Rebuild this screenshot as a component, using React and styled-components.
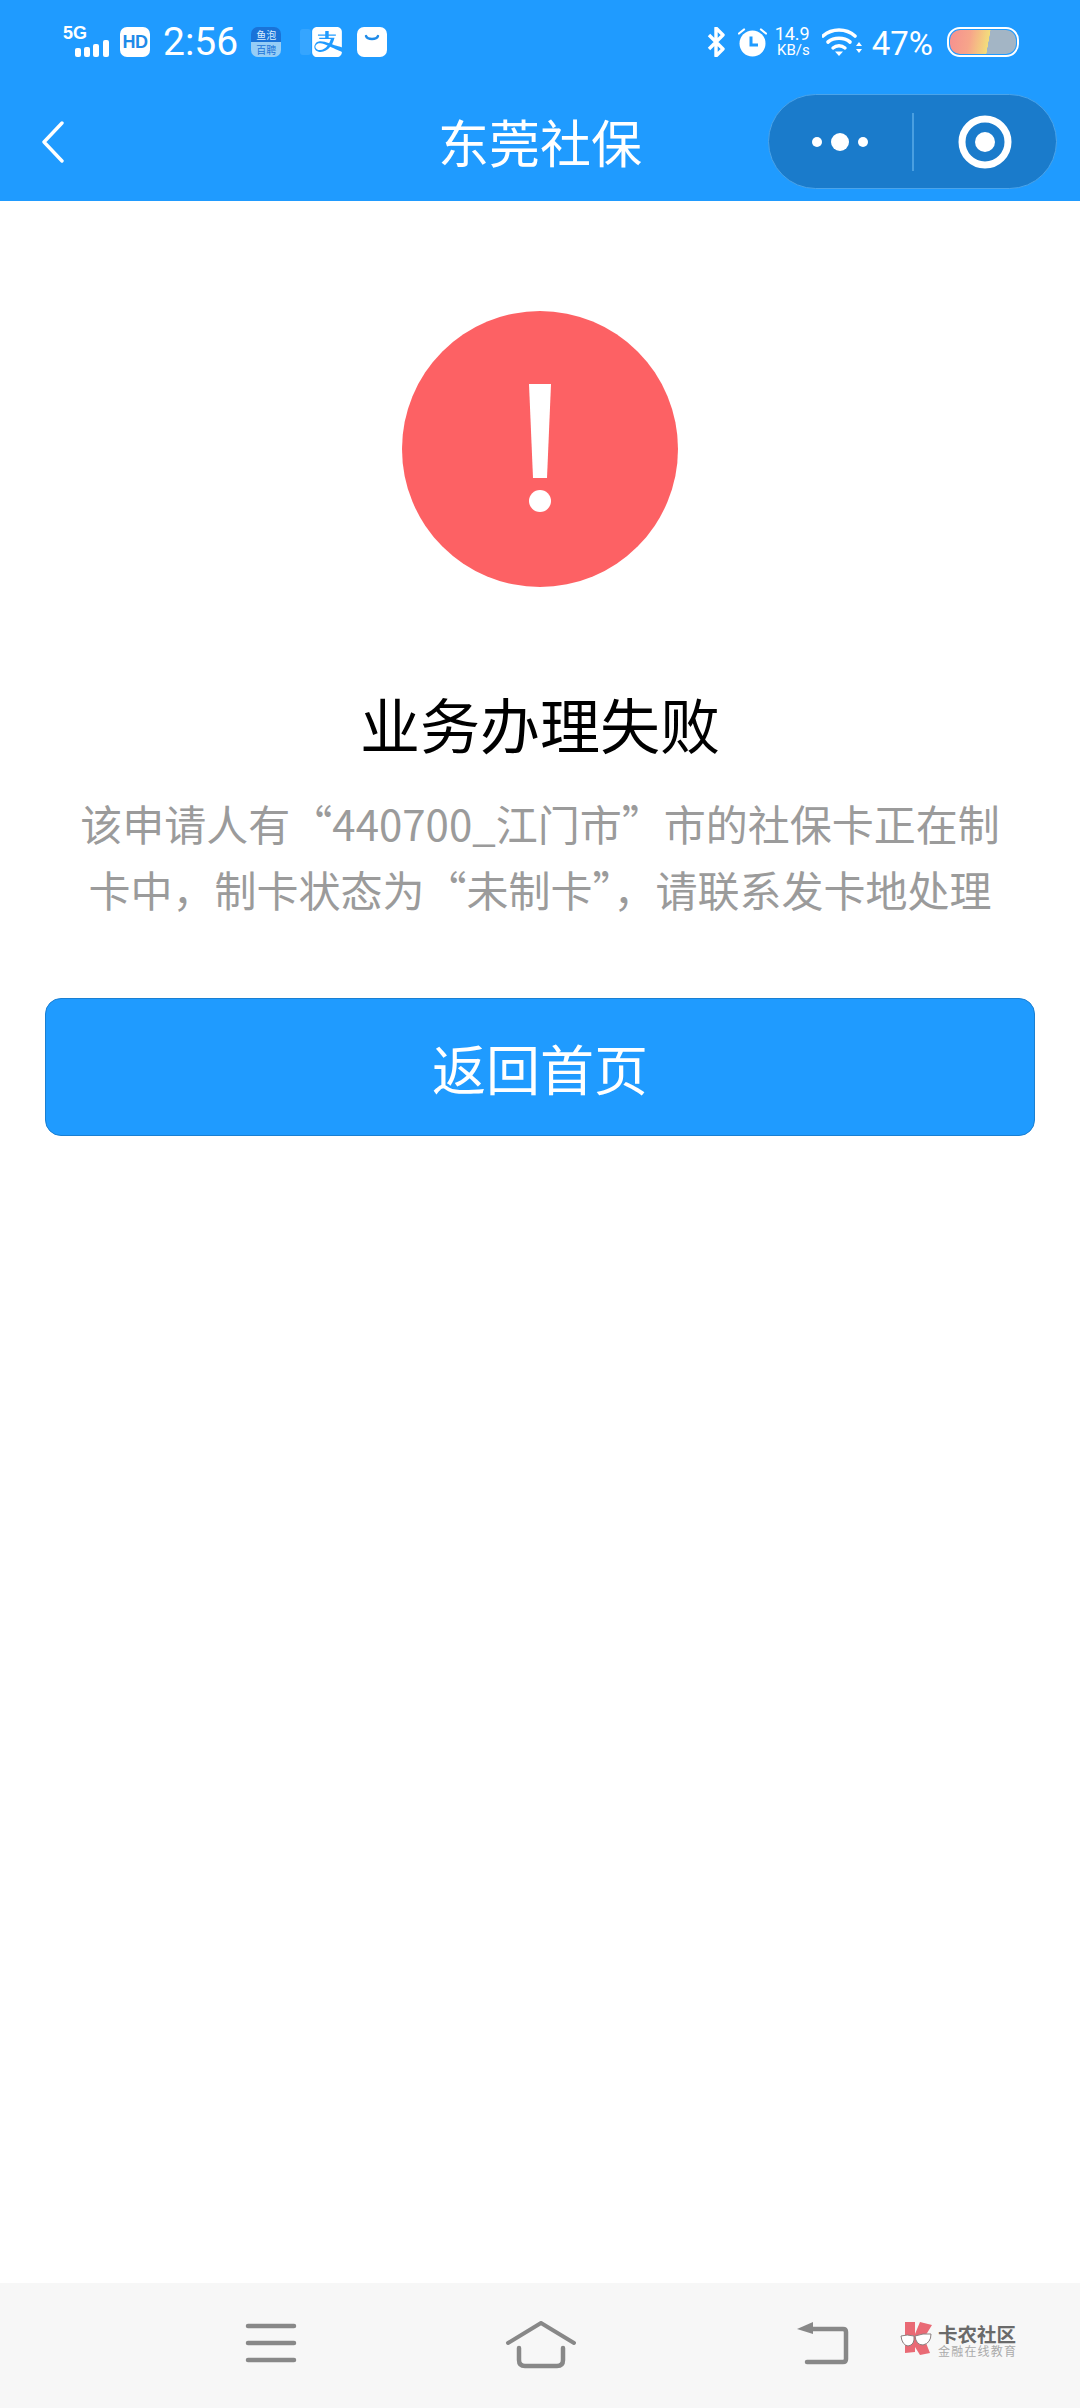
import React from 'react';
import styled, { createGlobalStyle } from 'styled-components';
import { SiAlipay } from 'react-icons/si';

const Global = createGlobalStyle`
  html, body { margin: 0; padding: 0; background: #fff; }
  * { box-sizing: border-box; }
  body { font-family: "Noto Sans CJK SC", "Noto Sans", sans-serif; }
`;

const Page = styled.div`
  width: 1080px;
  height: 2408px;
  display: flex;
  flex-direction: column;
  background: #fff;
`;

const Header = styled.header`
  background: #1f9bff;
  color: #fff;
  flex: none;
`;

const StatusBar = styled.div`
  height: 88px;
  padding: 27px 61px 0 63px;
  display: flex;
  justify-content: space-between;
  align-items: flex-start;
`;

const StatusGroup = styled.div`
  display: flex;
  align-items: flex-start;
`;

const Slot = styled.div`
  flex: none;
  margin-left: ${p => p.$ml || 0}px;
  display: flex;
  height: 30px;
  align-items: center;
  position: relative;
`;

const FiveG = styled.span`
  position: absolute;
  left: 0;
  top: -3px;
  font: 700 18px/18px "Liberation Sans", sans-serif;
  color: #fff;
`;

const HdBadge = styled.div`
  width: 30px;
  height: 30px;
  border-radius: 7px;
  background: #fff;
  color: #1f8be8;
  font: 800 18px/30px "Liberation Sans", sans-serif;
  text-align: center;
  letter-spacing: -0.5px;
`;

const Time = styled.span`
  font: 400 39px/30px Roboto, sans-serif;
  color: #fff;
`;

const Percent = styled.span`
  font: 400 33px/32px Roboto, sans-serif;
  color: #fff;
  padding-top: 3px;
`;

const FishBadge = styled.div`
  width: 30px;
  height: 30px;
  border-radius: 7px;
  overflow: hidden;
  display: flex;
  flex-direction: column;
`;

const FishRow = styled.span`
  flex: 1;
  background: ${p => p.$bg};
  color: ${p => p.$fg};
  font-size: 10px;
  line-height: 15px;
  text-align: center;
  white-space: nowrap;
`;

const Ghost = styled.div`
  position: absolute;
  left: -12px;
  top: 2px;
  width: 11px;
  height: 26px;
  background: rgba(255, 255, 255, 0.1);
  border-radius: 3px;
`;

const Speed = styled.div`
  width: 36px;
  text-align: right;
  font: 400 15.5px/16px Roboto, sans-serif;
  color: #fff;
  white-space: nowrap;
`;

const SpeedLine = styled.div`
  font-size: ${p => p.$size}px;
`;

const Battery = styled.div`
  width: 72px;
  height: 30px;
  border: 2px solid #fff;
  border-radius: 13px;
  padding: 1px;
`;

const BatteryInner = styled.div`
  height: 100%;
  border-radius: 10px;
  background: linear-gradient(100deg, #f59090 0%, #f7a58a 30%, #f3dc7b 57%, #f3dc7b 57.5%, #a3b5c5 58%, #a3b5c5 100%);
`;

const NavBar = styled.div`
  display: grid;
  grid-template-columns: 1fr auto 1fr;
  align-items: center;
  padding: 6px 23px 12px;
`;

const BackIcon = styled.svg`
  display: block;
  margin-left: 18px;
`;

const Title = styled.h1`
  margin: 0;
  font-size: 51px;
  font-weight: 400;
  line-height: 95px;
  color: #fff;
  white-space: nowrap;
`;

const Capsule = styled.div`
  justify-self: end;
  width: 289px;
  height: 95px;
  border-radius: 48px;
  background: #1a7bcb;
  border: 1.5px solid #4ba4ea;
  display: flex;
  align-items: center;
`;

const CapsuleCell = styled.div`
  flex: 1;
  display: flex;
  justify-content: center;
  align-items: center;
`;

const CapsuleDivider = styled.div`
  width: 2px;
  height: 58px;
  background: #4a9fe0;
`;

const Main = styled.main`
  flex: 1;
  display: flex;
  flex-direction: column;
  align-items: center;
  padding: 110px 45px 0;
`;

const AlertCircle = styled.svg`
  display: block;
  flex: none;
`;

const ResultTitle = styled.h2`
  margin: 96px 0 0;
  font-size: 60px;
  font-weight: 400;
  line-height: 80px;
  color: #000;
`;

const Description = styled.p`
  margin: 27px 0 0;
  padding: 0 25px;
  font-size: 42px;
  line-height: 66px;
  color: #9b9b9b;
  text-align: center;
`;

const PrimaryButton = styled.button`
  margin-top: 76px;
  width: 100%;
  height: 138px;
  border-radius: 16px;
  border: 1px solid #1a7fd2;
  background: #1f9bff;
  color: #fff;
  font-family: inherit;
  font-size: 54px;
  padding: 0;
`;

const BottomNav = styled.nav`
  position: relative;
  flex: none;
  height: 125px;
  background: #f7f7f7;
  display: flex;
  align-items: flex-start;
  padding: 38px 0 0 244px;
`;

const NavIcon = styled.svg`
  display: block;
  flex: none;
  margin-left: ${p => p.$ml || 0}px;
`;

const Watermark = styled.div`
  position: absolute;
  left: 900px;
  top: 39px;
  display: flex;
  align-items: flex-start;
  gap: 1px;
`;

const WatermarkText = styled.div`
  display: flex;
  flex-direction: column;
  padding-top: 2px;
`;

const WatermarkName = styled.span`
  font-size: 19.5px;
  font-weight: 700;
  line-height: 20px;
  color: #6a6a6a;
  white-space: nowrap;
`;

const WatermarkSub = styled.span`
  font-size: 12px;
  line-height: 14px;
  letter-spacing: 1.2px;
  color: #aaa;
  white-space: nowrap;
`;

export default function App() {
  return (
    <Page>
      <Global />
      <Header>
        <StatusBar>
          <StatusGroup>
            <Slot>
              <FiveG>5G</FiveG>
              <svg width="47" height="30" viewBox="0 0 47 30">
                <rect x="12" y="21" width="6" height="9" rx="2" fill="#fff" />
                <rect x="21" y="20" width="6" height="10" rx="2" fill="#fff" />
                <rect x="30" y="17" width="6" height="13" rx="2" fill="#fff" />
                <rect x="40" y="13" width="6" height="17" rx="2" fill="#fff" />
              </svg>
            </Slot>
            <Slot $ml={10}><HdBadge>HD</HdBadge></Slot>
            <Slot $ml={13}><Time>2:56</Time></Slot>
            <Slot $ml={13}>
              <FishBadge>
                <FishRow $bg="#1a73d8" $fg="#d7ecff">鱼泡</FishRow>
                <FishRow $bg="#96cdf6" $fg="#1a73d8">百聘</FishRow>
              </FishBadge>
            </Slot>
            <Slot $ml={31}>
              <Ghost />
              <SiAlipay size={30} color="#fff" />
            </Slot>
            <Slot $ml={15}>
              <svg width="30" height="30" viewBox="0 0 30 30">
                <rect width="30" height="30" rx="7" fill="#fff" />
                <path d="M9 9c1.500 4 10.500 4 12 0" fill="none" stroke="#1f8be8" strokeWidth="2.400" strokeLinecap="round" />
              </svg>
            </Slot>
          </StatusGroup>
          <StatusGroup>
            <Slot>
              <svg width="19" height="30" viewBox="0 0 19 30">
                <path d="M2 8l14 14-7 7V1l7 7L2 22" fill="none" stroke="#fff" strokeWidth="3.400" strokeLinejoin="round" />
              </svg>
            </Slot>
            <Slot $ml={12}>
              <svg width="29" height="30" viewBox="0 0 29 30">
                <circle cx="14.500" cy="16.500" r="13" fill="#fff" />
                <path d="M13 9.500v8.500h7" fill="none" stroke="#1f9bff" strokeWidth="3" />
                <path d="M1 6.500l5-4M28 6.500l-5-4" stroke="#fff" strokeWidth="2.200" strokeLinecap="round" />
              </svg>
            </Slot>
            <Slot $ml={7}>
              <Speed>
                <SpeedLine $size={18}>14.9</SpeedLine>
                <SpeedLine $size={15}>KB/s</SpeedLine>
              </Speed>
            </Slot>
            <Slot $ml={12}>
              <svg width="40" height="30" viewBox="0 0 40 30">
                <path d="M1 9c9-8 23-8 32 0" fill="none" stroke="#fff" strokeWidth="3.600" strokeLinecap="round" />
                <path d="M6 15c6-5 16-5 22 0" fill="none" stroke="#fff" strokeWidth="3.600" strokeLinecap="round" />
                <path d="M11 21c3.500-3 8.500-3 12 0" fill="none" stroke="#fff" strokeWidth="3.400" strokeLinecap="round" />
                <path d="M13 24.500h8l-4 4.500z" fill="#fff" />
                <path d="M34 19h6l-3-4zM34 22h6l-3 4z" fill="#fff" />
              </svg>
            </Slot>
            <Slot $ml={10}><Percent>47%</Percent></Slot>
            <Slot $ml={14}>
              <Battery><BatteryInner /></Battery>
            </Slot>
          </StatusGroup>
        </StatusBar>
        <NavBar>
          <BackIcon width="23" height="42" viewBox="0 0 23 42">
            <path d="M21 2L3 21l18 19" fill="none" stroke="#fff" strokeWidth="3.400" strokeLinecap="round" strokeLinejoin="round" />
          </BackIcon>
          <Title>东莞社保</Title>
          <Capsule>
            <CapsuleCell>
              <svg width="62" height="20" viewBox="0 0 62 20">
                <circle cx="8" cy="10" r="5" fill="#fff" />
                <circle cx="31" cy="10" r="9" fill="#fff" />
                <circle cx="54" cy="10" r="5" fill="#fff" />
              </svg>
            </CapsuleCell>
            <CapsuleDivider />
            <CapsuleCell>
              <svg width="54" height="54" viewBox="0 0 54 54">
                <circle cx="27" cy="27" r="23" fill="none" stroke="#fff" strokeWidth="7" />
                <circle cx="27" cy="27" r="10" fill="#fff" />
              </svg>
            </CapsuleCell>
          </Capsule>
        </NavBar>
      </Header>
      <Main>
        <AlertCircle width="276" height="276" viewBox="0 0 276 276">
          <circle cx="138" cy="138" r="138" fill="#fd6164" />
          <path d="M127 73h22l-4 94h-14z" fill="#fff" />
          <circle cx="138" cy="190" r="11" fill="#fff" />
        </AlertCircle>
        <ResultTitle>业务办理失败</ResultTitle>
        <Description>该申请人有“440700_江门市”市的社保卡正在制卡中，制卡状态为“未制卡”，请联系发卡地处理</Description>
        <PrimaryButton>返回首页</PrimaryButton>
      </Main>
      <BottomNav>
        <NavIcon width="54" height="46" viewBox="0 0 54 46">
          <path d="M4 5h46M4 22h46M4 39h46" stroke="#888" strokeWidth="4.500" strokeLinecap="round" />
        </NavIcon>
        <NavIcon $ml={206} width="74" height="48" viewBox="0 0 74 48">
          <path d="M4 22L37 2l33 20" fill="none" stroke="#888" strokeWidth="4" strokeLinecap="round" strokeLinejoin="round" />
          <path d="M15 27v12q0 6 6 6h32q6 0 6-6V27" fill="none" stroke="#888" strokeWidth="4.500" strokeLinecap="round" />
        </NavIcon>
        <NavIcon $ml={218} width="54" height="46" viewBox="0 0 54 46">
          <path d="M1 8L17 1v12z" fill="#888" />
          <path d="M15 8h32q3 0 3 3v27q0 3-3 3H11" fill="none" stroke="#888" strokeWidth="4.500" strokeLinecap="round" />
        </NavIcon>
        <Watermark>
          <svg width="37" height="36" viewBox="0 0 37 36">
            <path d="M5 0h10v12l5-12 12 3-8 13 6 15-10 2-5-8v5l-10 1z" fill="#e96a75" />
            <path d="M1 14q6-2 13 0 1 9-6 10-6-1-7-10zM15 14q8-3 16-2 0 9-8 11-7 0-8-9z" fill="#fff" stroke="#8a7f7f" strokeWidth="1" />
          </svg>
          <WatermarkText>
            <WatermarkName>卡农社区</WatermarkName>
            <WatermarkSub>金融在线教育</WatermarkSub>
          </WatermarkText>
        </Watermark>
      </BottomNav>
    </Page>
  );
}
